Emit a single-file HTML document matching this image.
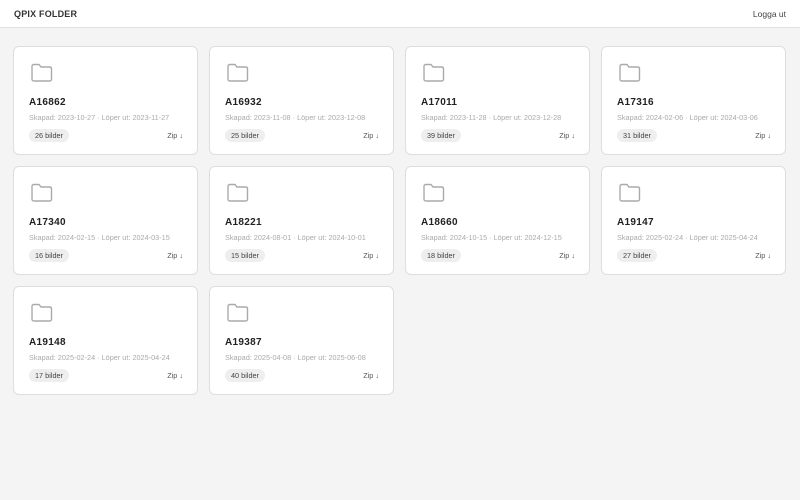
<!DOCTYPE html>
<html><head><style>
*{box-sizing:border-box;margin:0;padding:0}
body{width:800px;height:500px;background:#f4f4f4;font-family:"Liberation Sans",sans-serif;color:#222;overflow:hidden}
.hd{height:28px;background:#fff;border-bottom:1px solid #e2e2e2;position:relative}
.hd .l{position:absolute;left:14px;top:9px;font-size:9px;font-weight:bold;letter-spacing:.2px;color:#333}
.hd .r{position:absolute;right:14px;top:9px;font-size:8.5px;color:#444}
.grid{position:absolute;left:13px;top:46px;display:grid;grid-template-columns:repeat(4,185px);column-gap:11px;row-gap:11px}
.c{height:109px;background:#fff;border:1px solid #dedede;border-radius:6px;position:relative}
.c svg{position:absolute;left:16px;top:16px}
.t{position:absolute;left:15px;top:50px;font-size:10px;font-weight:bold;letter-spacing:.3px;color:#222}
.m{position:absolute;left:15px;top:66px;font-size:7.3px;color:#aaa;white-space:nowrap}
.p{position:absolute;left:15px;top:82px;height:13px;padding:0 6px;background:#eee;border-radius:7px;font-size:7.3px;line-height:13px;color:#444}
.z{position:absolute;right:14px;top:84px;font-size:7.3px;color:#555}
</style></head><body>
<div class="hd"><span class="l">QPIX FOLDER</span><span class="r">Logga ut</span></div>
<div class="grid">
<div class="c"><svg width="23" height="19" viewBox="0 0 23 19"><path d="M2 3.5Q2 1.5 4 1.5H9L11 4H19.5Q21.5 4 21.5 6V16Q21.5 18 19.5 18H4Q2 18 2 16Z" fill="none" stroke="#aaa" stroke-width="1.4"/></svg><div class="t">A16862</div><div class="m">Skapad: 2023-10-27 · Löper ut: 2023-11-27</div><div class="p">26 bilder</div><div class="z">Zip ↓</div></div>
<div class="c"><svg width="23" height="19" viewBox="0 0 23 19"><path d="M2 3.5Q2 1.5 4 1.5H9L11 4H19.5Q21.5 4 21.5 6V16Q21.5 18 19.5 18H4Q2 18 2 16Z" fill="none" stroke="#aaa" stroke-width="1.4"/></svg><div class="t">A16932</div><div class="m">Skapad: 2023-11-08 · Löper ut: 2023-12-08</div><div class="p">25 bilder</div><div class="z">Zip ↓</div></div>
<div class="c"><svg width="23" height="19" viewBox="0 0 23 19"><path d="M2 3.5Q2 1.5 4 1.5H9L11 4H19.5Q21.5 4 21.5 6V16Q21.5 18 19.5 18H4Q2 18 2 16Z" fill="none" stroke="#aaa" stroke-width="1.4"/></svg><div class="t">A17011</div><div class="m">Skapad: 2023-11-28 · Löper ut: 2023-12-28</div><div class="p">39 bilder</div><div class="z">Zip ↓</div></div>
<div class="c"><svg width="23" height="19" viewBox="0 0 23 19"><path d="M2 3.5Q2 1.5 4 1.5H9L11 4H19.5Q21.5 4 21.5 6V16Q21.5 18 19.5 18H4Q2 18 2 16Z" fill="none" stroke="#aaa" stroke-width="1.4"/></svg><div class="t">A17316</div><div class="m">Skapad: 2024-02-06 · Löper ut: 2024-03-06</div><div class="p">31 bilder</div><div class="z">Zip ↓</div></div>
<div class="c"><svg width="23" height="19" viewBox="0 0 23 19"><path d="M2 3.5Q2 1.5 4 1.5H9L11 4H19.5Q21.5 4 21.5 6V16Q21.5 18 19.5 18H4Q2 18 2 16Z" fill="none" stroke="#aaa" stroke-width="1.4"/></svg><div class="t">A17340</div><div class="m">Skapad: 2024-02-15 · Löper ut: 2024-03-15</div><div class="p">16 bilder</div><div class="z">Zip ↓</div></div>
<div class="c"><svg width="23" height="19" viewBox="0 0 23 19"><path d="M2 3.5Q2 1.5 4 1.5H9L11 4H19.5Q21.5 4 21.5 6V16Q21.5 18 19.5 18H4Q2 18 2 16Z" fill="none" stroke="#aaa" stroke-width="1.4"/></svg><div class="t">A18221</div><div class="m">Skapad: 2024-08-01 · Löper ut: 2024-10-01</div><div class="p">15 bilder</div><div class="z">Zip ↓</div></div>
<div class="c"><svg width="23" height="19" viewBox="0 0 23 19"><path d="M2 3.5Q2 1.5 4 1.5H9L11 4H19.5Q21.5 4 21.5 6V16Q21.5 18 19.5 18H4Q2 18 2 16Z" fill="none" stroke="#aaa" stroke-width="1.4"/></svg><div class="t">A18660</div><div class="m">Skapad: 2024-10-15 · Löper ut: 2024-12-15</div><div class="p">18 bilder</div><div class="z">Zip ↓</div></div>
<div class="c"><svg width="23" height="19" viewBox="0 0 23 19"><path d="M2 3.5Q2 1.5 4 1.5H9L11 4H19.5Q21.5 4 21.5 6V16Q21.5 18 19.5 18H4Q2 18 2 16Z" fill="none" stroke="#aaa" stroke-width="1.4"/></svg><div class="t">A19147</div><div class="m">Skapad: 2025-02-24 · Löper ut: 2025-04-24</div><div class="p">27 bilder</div><div class="z">Zip ↓</div></div>
<div class="c"><svg width="23" height="19" viewBox="0 0 23 19"><path d="M2 3.5Q2 1.5 4 1.5H9L11 4H19.5Q21.5 4 21.5 6V16Q21.5 18 19.5 18H4Q2 18 2 16Z" fill="none" stroke="#aaa" stroke-width="1.4"/></svg><div class="t">A19148</div><div class="m">Skapad: 2025-02-24 · Löper ut: 2025-04-24</div><div class="p">17 bilder</div><div class="z">Zip ↓</div></div>
<div class="c"><svg width="23" height="19" viewBox="0 0 23 19"><path d="M2 3.5Q2 1.5 4 1.5H9L11 4H19.5Q21.5 4 21.5 6V16Q21.5 18 19.5 18H4Q2 18 2 16Z" fill="none" stroke="#aaa" stroke-width="1.4"/></svg><div class="t">A19387</div><div class="m">Skapad: 2025-04-08 · Löper ut: 2025-06-08</div><div class="p">40 bilder</div><div class="z">Zip ↓</div></div>
</div>
</body></html>
